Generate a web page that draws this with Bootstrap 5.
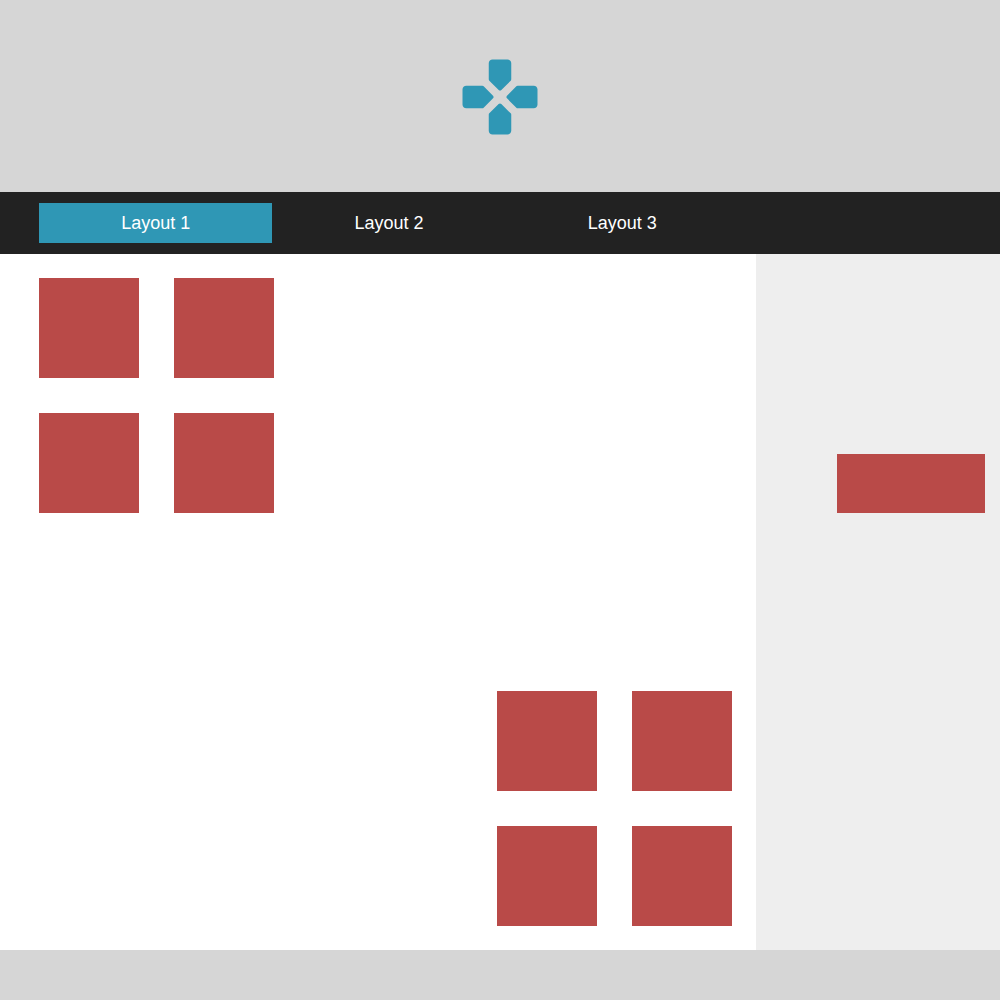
<!DOCTYPE html>
<html lang="en">
<head>
<meta charset="utf-8">
<meta name="viewport" content="width=device-width, initial-scale=1">
<title>Layouts</title>
<link href="https://cdn.jsdelivr.net/npm/bootstrap@5.3.0/dist/css/bootstrap.min.css" rel="stylesheet">
<style>
  body { font-family: Arial, "Liberation Sans", sans-serif; background: #fff; }
  .site-header { height: 192px; padding-top: 52px; background: #d6d6d6; }
  .site-header svg { width: 90px; height: 90px; fill: #2f97b5; }
  .site-nav { height: 62px; padding: 0 39px; background: #222; }
  .site-nav .nav-link { width: 233.33px; height: 40px; padding: 0; line-height: 40px; font-size: 18px; color: #fff; border-radius: 0; }
  .site-nav .nav-link.active { background: #2f97b5; }
  .main-area { padding: 24px 24px 24px 39px; }
  .side-area { width: 244px; padding: 200px 15px 0; background: #eee; }
  .tile-group { width: 235px; gap: 35px; }
  .tile { width: 100px; height: 100px; background: #b94a48; }
  .side-tile { width: 148px; height: 59px; background: #b94a48; }
  .site-footer { height: 50px; background: #d6d6d6; }
</style>
</head>
<body class="d-flex flex-column vh-100 overflow-hidden">
  <header class="site-header d-flex justify-content-center align-items-start flex-shrink-0">
    <svg viewBox="0 0 24 24" aria-hidden="true">
      <path id="arm" d="M15 7.29V3c0-.55-.45-1-1-1h-4c-.55 0-1 .45-1 1v4.29c0 .13.05.26.15.35l2.5 2.5c.2.2.51.2.71 0l2.5-2.5c.09-.09.14-.22.14-.35z"/>
      <use href="#arm" transform="rotate(90 12 12)"/>
      <use href="#arm" transform="rotate(180 12 12)"/>
      <use href="#arm" transform="rotate(270 12 12)"/>
    </svg>
  </header>
  <nav class="site-nav d-flex align-items-center flex-shrink-0">
    <div class="nav nav-pills flex-nowrap text-center">
      <a class="nav-link active" href="#">Layout 1</a>
      <a class="nav-link" href="#">Layout 2</a>
      <a class="nav-link" href="#">Layout 3</a>
    </div>
  </nav>
  <div class="d-flex flex-grow-1">
    <main class="main-area flex-grow-1 d-flex flex-column justify-content-between">
      <div class="tile-group d-flex flex-wrap align-self-start">
        <div class="tile"></div><div class="tile"></div>
        <div class="tile"></div><div class="tile"></div>
      </div>
      <div class="tile-group d-flex flex-wrap align-self-end">
        <div class="tile"></div><div class="tile"></div>
        <div class="tile"></div><div class="tile"></div>
      </div>
    </main>
    <aside class="side-area flex-shrink-0">
      <div class="side-tile ms-auto"></div>
    </aside>
  </div>
  <footer class="site-footer flex-shrink-0"></footer>
<script src="https://cdn.jsdelivr.net/npm/bootstrap@5.3.0/dist/js/bootstrap.bundle.min.js"></script>
</body>
</html>
